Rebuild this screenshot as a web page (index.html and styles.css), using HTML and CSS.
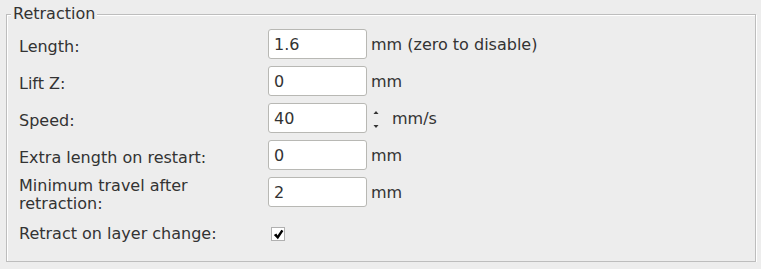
FILE: index.html
```html
<!DOCTYPE html>
<html lang="en">
<head>
    <meta charset="UTF-8">
    <title>Retraction</title>
    <link rel="stylesheet" href="styles.css">
</head>
<body>
    <fieldset class="group">
        <legend>Retraction</legend>

        <div class="row">
            <div class="label"><span>Length:</span></div>
            <input class="field" type="text" value="1.6">
            <span class="unit">mm (zero to disable)</span>
        </div>

        <div class="row">
            <div class="label"><span>Lift Z:</span></div>
            <input class="field" type="text" value="0">
            <span class="unit">mm</span>
        </div>

        <div class="row">
            <div class="label"><span>Speed:</span></div>
            <input class="field" type="text" value="40">
            <svg class="spin" width="8" height="24" viewBox="0 0 8 24">
                <path d="M4 5 L6.5 8 L1.5 8 Z" fill="#333"/>
                <path d="M1.5 19 L6.5 19 L4 22 Z" fill="#333"/>
            </svg>
            <span class="unit">mm/s</span>
        </div>

        <div class="row">
            <div class="label"><span>Extra length on restart:</span></div>
            <input class="field" type="text" value="0">
            <span class="unit">mm</span>
        </div>

        <div class="row">
            <div class="label"><span>Minimum travel after retraction:</span></div>
            <input class="field" type="text" value="2">
            <span class="unit">mm</span>
        </div>

        <div class="row row-check">
            <div class="label"><span>Retract on layer change:</span></div>
            <span class="check">
                <svg width="11" height="11" viewBox="0 0 11 11">
                    <path d="M0.8 6 L3.4 4.6 L4.5 6.4 L8.4 0.8 L10.4 2 L4.9 10.2 Z" fill="#000"/>
                </svg>
            </span>
        </div>
    </fieldset>
</body>
</html>
```

FILE: styles.css
```css
body {
    margin: 0;
    padding: 0;
    background-color: #ededed;
    color: #333;
    font-family: 'DejaVu Sans', sans-serif;
    font-size: 16px;
}

.group {
    margin: 5px 5px 0 6px;
    padding: 5px 4px 12px 4px;
    border: 1px solid #bdbdbd;
    box-shadow: inset 1px 1px 0 #fff, 1px 1px 0 #fff;
    min-width: 0;
}

.group legend {
    padding: 0 2px 2px 2px;
    line-height: 17px;
    background-color: #ededed;
}

.row {
    display: flex;
    align-items: center;
    height: 30px;
    margin: 0 0 7px 8px;
}

.row-check {
    margin-top: 12px;
    margin-bottom: 0;
}

.label {
    flex: none;
    width: 249px;
    padding-top: 5px;
    line-height: 18px;
}

.label span {
    display: block;
    max-width: 210px;
}

.row-check .label {
    padding-top: 0;
}

.field {
    box-sizing: border-box;
    width: 99px;
    height: 30px;
    margin: 0;
    padding: 0 5px;
    border: 1px solid #b8b8b4;
    border-radius: 3px;
    background-color: #fff;
    color: #333;
    font-family: 'DejaVu Sans', sans-serif;
    font-size: 16px;
    outline: none;
}

.unit {
    padding-left: 4px;
}

.spin {
    margin-left: 5px;
    margin-right: 12px;
}

.spin + .unit {
    padding-left: 0;
}

.check {
    display: flex;
    align-items: center;
    justify-content: center;
    box-sizing: border-box;
    width: 14px;
    height: 14px;
    margin-left: 3px;
    border: 1px solid #b0b0b0;
    background-color: #fff;
}
```
